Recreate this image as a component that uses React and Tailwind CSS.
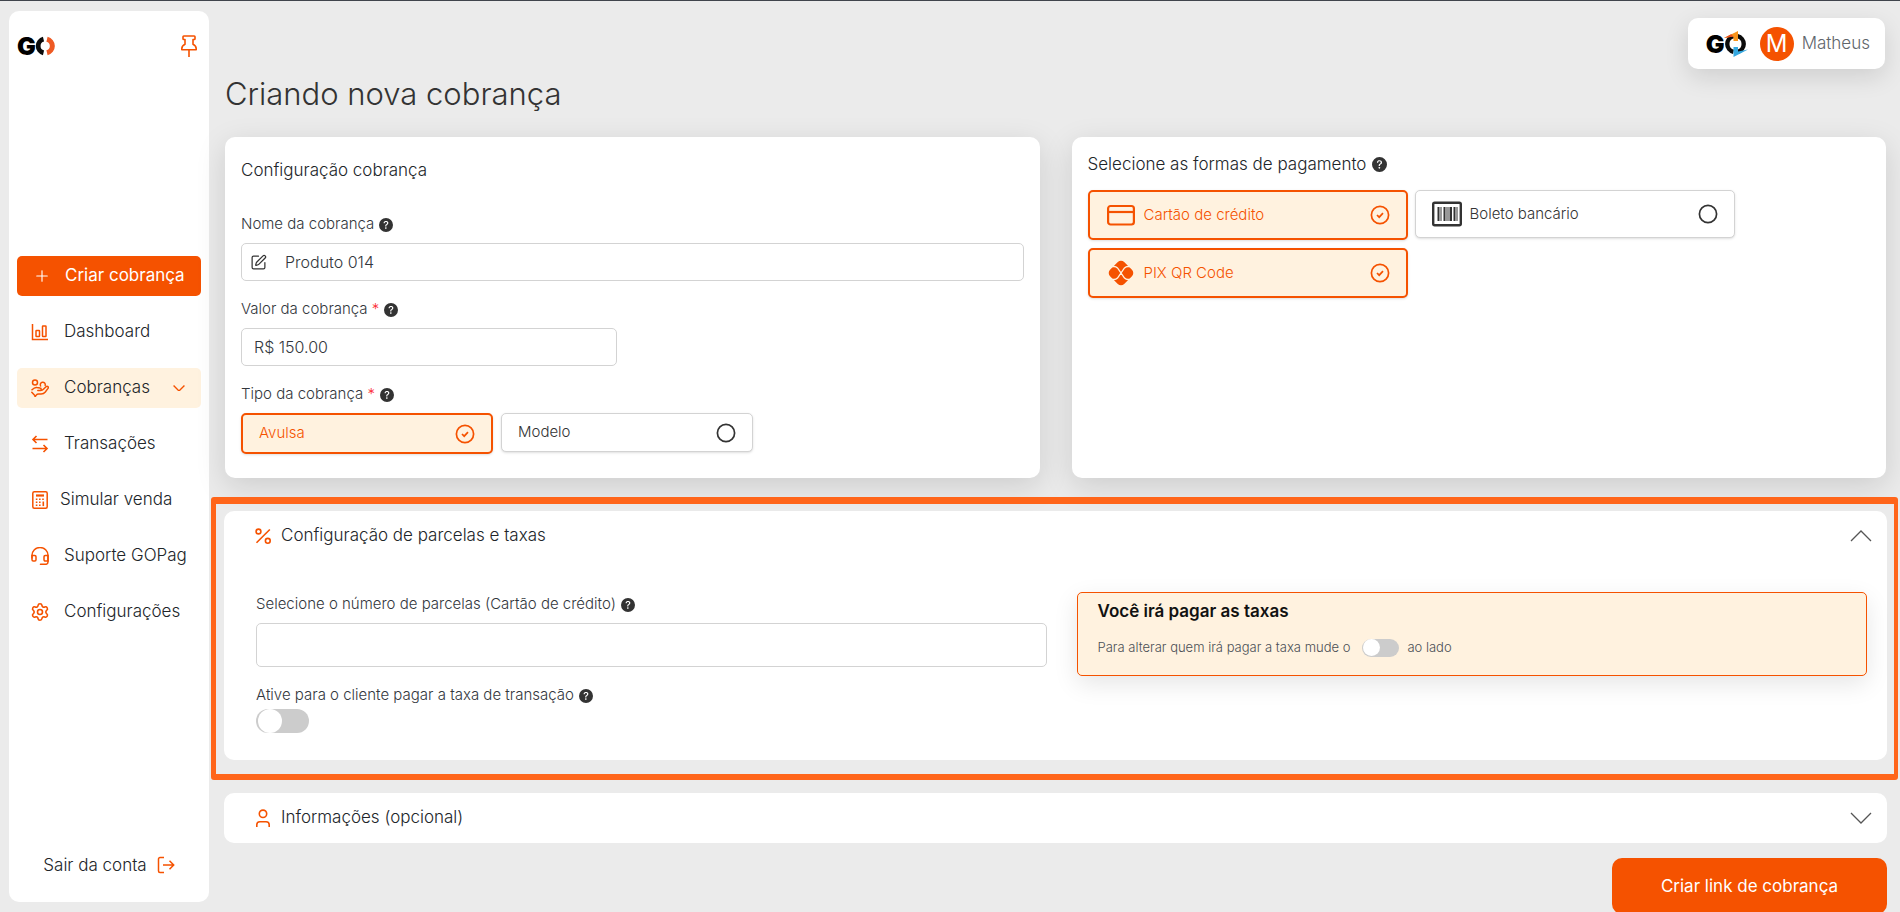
import React from "react";
import { BsQuestionCircleFill } from "react-icons/bs";
import { Plus, Settings, SquarePen } from "lucide-react";

function Logo({ colorful }) {
  return (
    <span className="flex items-center" role="img" aria-label="GO">
      <span className="text-[25px] leading-6 font-black text-black" aria-hidden="true">G</span>
      {colorful ? (
        <svg className="-ml-px h-7 w-6" viewBox="0 0 24 28" fill="none">
          <path d="M9.500 6.200A8 8 0 0 0 9.500 21.800" stroke="#0b0b0b" strokeWidth="4.4" />
          <path d="M13.500 6.200A8 8 0 0 1 13.500 21.800" stroke="#0b0b0b" strokeWidth="4.4" />
          <path d="M0 8 14 1v10H9.500V6.500Z" fill="#f7941d" />
          <path d="M0 8 7 4.200 9.500 6.500Z" fill="#e8501e" />
          <path d="M9.500 17h4.500v4.500L24 19.500 9.500 27Z" fill="#35a8e0" />
        </svg>
      ) : (
        <svg className="-ml-px h-5 w-5" viewBox="0 0 20 20" fill="none">
          <path d="M8.500 3.200A7 7 0 0 0 8.500 16.800" stroke="#0b0b0b" strokeWidth="4.800" />
          <path d="M12 3.200A7 7 0 0 1 12 16.800" stroke="#ee5a24" strokeWidth="5" />
        </svg>
      )}
    </span>
  );
}

function PinIcon() {
  return (
    <svg className="h-[22px] w-4" viewBox="0 0 16 22" fill="none" stroke="currentColor" strokeWidth="1.600" strokeLinejoin="round">
      <path d="M2.800 1h10.400a.8.8 0 0 1 .8.8v1.900a.8.8 0 0 1-.8.8H12v4.800c2 1 3.200 2.600 3.200 4.400v1.100H.8v-1.100c0-1.800 1.200-3.400 3.200-4.400V4.500H2.800a.8.8 0 0 1-.8-.8V1.800a.8.8 0 0 1 .8-.8ZM8 14.800V22" />
    </svg>
  );
}

function BarsIcon() {
  return (
    <svg className="size-[18px]" viewBox="0 0 18 18" fill="none" stroke="currentColor" strokeWidth="1.500">
      <path d="M1.500 1v15.500H17" />
      <rect x="5" y="7.500" width="3.500" height="6" rx="0.500" />
      <rect x="11.500" y="3" width="3.500" height="10.500" rx="0.500" />
    </svg>
  );
}

function HandCoinIcon() {
  return (
    <svg className="size-[18px]" viewBox="0 0 18 18" fill="none" stroke="currentColor" strokeWidth="1.500" strokeLinejoin="round" strokeLinecap="round">
      <circle cx="4" cy="3.500" r="2.500" />
      <path d="M9.600 7a2.500 2.500 0 1 1 4.600-.6" />
      <path d="M1 10.800c1.600-1.600 3.300-2.600 5-2.200l3 .5c1.600.2 1.600 2.400 0 2.400H6.800h2.700c1.500 0 2.300-.5 3.200-1.500l2.300-2.300c1.300-1.200 3 .3 2 1.700l-2.700 3.600c-1.200 1.500-2.300 2-4.200 2H7.500c-1 0-1.700.4-2.400 1.200L4 17.300" />
      <path d="M.8 13.200 4.500 17.300" />
    </svg>
  );
}

function SwapIcon() {
  return (
    <svg className="size-[18px]" viewBox="0 0 18 18" fill="none" stroke="currentColor" strokeWidth="1.600">
      <path d="M16.500 4.500H2M5.500 1 2 4.500 5.500 8M1.500 13.500H16M12.500 10l3.500 3.500-3.500 3.500" />
    </svg>
  );
}

function CalculatorIcon() {
  return (
    <svg className="size-[18px]" viewBox="0 0 18 18" fill="none" stroke="currentColor">
      <rect x="1.800" y=".8" width="14.400" height="16.400" rx="1.500" strokeWidth="1.500" />
      <path d="M5 4.500h8" strokeWidth="2.200" />
      <path d="M4.800 8.200h8.400M4.800 11.300h5.400M4.800 14.300h5.400" strokeWidth="1.500" strokeDasharray="1.600 1.600" />
      <path d="M12.300 10.500v4.600" strokeWidth="1.600" />
    </svg>
  );
}

function HeadsetIcon() {
  return (
    <svg className="size-[18px]" viewBox="0 0 18 18" fill="none" stroke="currentColor" strokeWidth="1.500" strokeLinecap="round">
      <path d="M1 11V8.500a8 8 0 0 1 16 0V15a2.300 2.300 0 0 1-2.300 2.300H9.500" />
      <path d="M1 8.500h2.800A1.200 1.200 0 0 1 5 9.700v3.100A1.200 1.200 0 0 1 3.800 14H2.200A1.200 1.200 0 0 1 1 12.800ZM17 8.500h-2.800A1.200 1.200 0 0 0 13 9.700v3.100a1.200 1.200 0 0 0 1.200 1.200H17Z" />
    </svg>
  );
}

function ExitIcon() {
  return (
    <svg className="size-[18px]" viewBox="0 0 18 18" fill="none" stroke="#f55200" strokeWidth="1.500">
      <path d="M7 1.500H3A1.500 1.500 0 0 0 1.500 3v12A1.500 1.500 0 0 0 3 16.500h4M6 9h10.500M12.500 4.800 16.700 9l-4.200 4.200" />
    </svg>
  );
}

function PercentIcon() {
  return (
    <svg className="size-[18px]" viewBox="0 0 18 18" fill="none" stroke="currentColor" strokeWidth="1.600">
      <circle cx="4.500" cy="4.500" r="2.400" />
      <circle cx="13.800" cy="13.800" r="2.400" />
      <path d="M15.800 2.500 2.500 15.800" />
    </svg>
  );
}

function UserIcon() {
  return (
    <svg className="size-[18px]" viewBox="0 0 18 18" fill="none" stroke="currentColor" strokeWidth="1.600">
      <circle cx="9" cy="4.800" r="3.700" />
      <path d="M2.800 18v-2.200c0-1.900 1.200-3.100 3.100-3.100h6.200c1.900 0 3.100 1.200 3.100 3.100V18" />
    </svg>
  );
}

function CardIcon() {
  return (
    <svg className="h-[26px] w-7" viewBox="0 0 28 26" fill="none" stroke="currentColor" strokeWidth="2.200">
      <rect x="1.100" y="4" width="25.800" height="18.500" rx="2.500" />
      <path d="M1 10h26" />
    </svg>
  );
}

function BarcodeIcon() {
  return (
    <svg className="h-[26px] w-[30px]" viewBox="0 0 30 26" fill="none" stroke="currentColor">
      <rect x="1.200" y="1.700" width="27.600" height="22.600" rx="1.500" strokeWidth="2.400" />
      <path d="M6.500 6v14M12.500 6v14M19 6v14M22.500 6v14" strokeWidth="2" />
      <path d="M9 6v14M15 6v14M17 6v14M25 6v14" strokeWidth="1" />
    </svg>
  );
}

function PixIcon() {
  return (
    <svg className="size-7" viewBox="0 0 28 28">
      <rect x="4" y="4" width="20" height="20" rx="4.500" fill="currentColor" transform="rotate(45 14 14)" />
      <path d="M4 7.500h3c1.400 0 2.500.5 3.500 1.500l7 10c1 1 2.100 1.500 3.500 1.500h3M4 20.500h3c1.400 0 2.500-.5 3.500-1.500l7-10c1-1 2.100-1.500 3.500-1.500h3" fill="none" stroke="#fff2df" strokeWidth="1.300" />
    </svg>
  );
}

function Chevron({ className, width }) {
  return (
    <svg className={className} viewBox="0 0 22 12" fill="none" stroke="currentColor" strokeWidth={width}>
      <path d="M1 1l10 10L21 1" />
    </svg>
  );
}

function Mark({ on }) {
  return (
    <svg className="size-5 shrink-0" viewBox="0 0 20 20" fill="none" stroke="currentColor" strokeWidth="1.700">
      <circle cx="10" cy="10" r="8.600" />
      {on && <path d="M7 10l2.200 2.200L13 8.200" />}
    </svg>
  );
}

function Label({ children, required, htmlFor, id }) {
  return (
    <div className="flex h-[21px] items-center gap-[5px] text-[15px] font-light text-[#33373d]">
      <label htmlFor={htmlFor} id={id}>
        {children}
        {required && <span className="text-red-500"> *</span>}
      </label>
      <BsQuestionCircleFill className="size-[14px] text-[#333]" />
    </div>
  );
}

function Option({ on, icon, tall, children }) {
  const tone = on
    ? "border-2 border-[#f55200] bg-[#fff2df] text-[#f55200]"
    : "border border-[#d3d3d3] bg-white text-[#333]";
  const size = tall ? (on ? "h-[50px] w-80" : "h-12 w-80") : on ? "h-[41px] w-63" : "h-[39px] w-63";
  return (
    <button
      type="button"
      aria-pressed={Boolean(on)}
      className={`flex items-center gap-2 rounded-[5px] px-4 text-[15px] font-light shadow-sm ${tone} ${size}`}
    >
      {icon && <span className="flex w-[30px] justify-center">{icon}</span>}
      <span className="flex-1 text-left">{children}</span>
      <Mark on={on} />
    </button>
  );
}

function NavItem({ icon, children, active, arrow, compact }) {
  return (
    <a
      href="#"
      className={`flex h-10 items-center rounded-[5px] pr-3 pl-[14px] text-[17px] font-light text-[#212529] ${compact ? "gap-[11px]" : "gap-[15px]"} ${active ? "bg-[#fff2df]" : ""}`}
    >
      <span className="flex size-[18px] shrink-0 items-center justify-center text-[#f55200]">{icon}</span>
      <span className="flex-1 whitespace-nowrap">{children}</span>
      {arrow && <Chevron className="mr-1 w-3 text-[#f55200]" width="2.500" />}
    </a>
  );
}

function PanelHeader({ icon, open, children }) {
  return (
    <button
      type="button"
      aria-expanded={Boolean(open)}
      className="flex h-[50px] w-full items-center gap-[9px] pr-[15px] pl-[30px] text-[17px] font-light text-[#212529]"
    >
      <span className="text-[#f55200]">{icon}</span>
      <span className="flex-1 text-left">{children}</span>
      <Chevron className={`w-[22px] text-[#555] ${open ? "rotate-180" : ""}`} width="1.300" />
    </button>
  );
}

function Toggle({ id }) {
  return (
    <span className="mt-[3px] flex h-6 w-[53px] items-center rounded-full bg-[#ccc] pl-[2px] has-checked:justify-end has-checked:bg-[#f55200]">
      <input id={id} type="checkbox" role="switch" className="size-6 cursor-pointer appearance-none rounded-full bg-white" />
    </span>
  );
}

export default function App() {
  return (
    <div className="flex h-screen overflow-hidden border-t border-[#40444c] bg-[#ebebeb] font-['Inter',sans-serif]">
      <aside className="my-[10px] ml-[9px] flex w-50 shrink-0 flex-col rounded-[10px] bg-white px-2">
        <div className="flex h-[70px] items-center justify-between pr-1">
          <Logo />
          <button type="button" aria-label="Fixar menu" className="text-[#f55200]">
            <PinIcon />
          </button>
        </div>
        <nav className="mt-[175px] flex flex-col gap-4">
          <a href="#" className="flex h-10 items-center gap-[14px] rounded-[5px] bg-[#f55200] pl-4 text-[17px] whitespace-nowrap text-white">
            <Plus className="size-[18px] shrink-0" strokeWidth={1.5} />
            Criar cobrança
          </a>
          <NavItem icon={<BarsIcon />}>Dashboard</NavItem>
          <NavItem icon={<HandCoinIcon />} active arrow>Cobranças</NavItem>
          <NavItem icon={<SwapIcon />}>Transações</NavItem>
          <NavItem icon={<CalculatorIcon />} compact>Simular venda</NavItem>
          <NavItem icon={<HeadsetIcon />}>Suporte GOPag</NavItem>
          <NavItem icon={<Settings className="size-5 shrink-0" strokeWidth={1.9} />}>Configurações</NavItem>
        </nav>
        <button type="button" className="mt-auto mb-6 flex items-center justify-center gap-[10px] text-[17px] font-light text-[#212529]">
          Sair da conta
          <ExitIcon />
        </button>
      </aside>

      <main className="flex min-w-0 flex-1 flex-col">
        <div className="flex justify-end pt-[17px] pr-[15px]">
          <div className="flex h-[51px] items-center gap-3 rounded-[10px] bg-white pr-[15px] pl-[18px] shadow-[0_8px_24px_rgba(0,0,0,0.12)]">
            <Logo colorful />
            <span className="flex size-[34px] items-center justify-center rounded-full bg-[#f55200] text-2xl text-white">M</span>
            <span className="-ml-1 text-[17px] font-light text-[#60656b]">Matheus</span>
          </div>
        </div>
        <h1 className="mt-[5px] ml-4 text-[31px] leading-10 font-light text-[#333]">Criando nova cobrança</h1>

        <div className="mt-[23px] mr-[14px] ml-4 grid grid-cols-2 gap-8">
          <section className="rounded-[10px] bg-white px-4 pt-[21px] pb-6 shadow-[0_8px_30px_rgba(0,0,0,0.13)]">
            <h2 className="mb-8 text-[17px] leading-6 font-light text-[#212529]">Configuração cobrança</h2>
            <div className="flex flex-col gap-[18px]">
              <div className="flex flex-col gap-2">
                <Label htmlFor="nome">Nome da cobrança</Label>
                <div className="flex h-[38px] items-center gap-[18px] rounded-[5px] border border-[#d3d3d3] px-2">
                  <SquarePen className="size-[17px] shrink-0 text-[#333]" strokeWidth={1.75} />
                  <input id="nome" defaultValue="Produto 014" className="min-w-0 flex-1 text-base font-light text-[#33373d] outline-none" />
                </div>
              </div>
              <div className="flex flex-col gap-2">
                <Label htmlFor="valor" required>Valor da cobrança</Label>
                <input id="valor" defaultValue="R$ 150.00" className="h-[38px] w-94 rounded-[5px] border border-[#d3d3d3] px-3 text-base font-light text-[#33373d] outline-none" />
              </div>
              <div className="flex flex-col gap-2">
                <Label id="tipo" required>Tipo da cobrança</Label>
                <div role="group" aria-labelledby="tipo" className="flex items-start gap-2">
                  <Option on>Avulsa</Option>
                  <Option>Modelo</Option>
                </div>
              </div>
            </div>
          </section>

          <section className="rounded-[10px] bg-white px-4 pt-[15px] shadow-[0_8px_30px_rgba(0,0,0,0.13)]">
            <h2 className="mb-[14px] flex items-center gap-[6px] text-[17px] leading-6 font-light text-[#212529]">
              Selecione as formas de pagamento
              <BsQuestionCircleFill className="size-[15px] text-[#333]" />
            </h2>
            <div className="flex flex-wrap items-start gap-x-[7px] gap-y-2">
              <Option on tall icon={<CardIcon />}>Cartão de crédito</Option>
              <Option tall icon={<BarcodeIcon />}>Boleto bancário</Option>
              <Option on tall icon={<PixIcon />}>PIX QR Code</Option>
            </div>
          </section>
        </div>

        <div className="mt-[19px] mr-[2px] ml-[2px] rounded-[3px] border-t-7 border-r-4 border-b-6 border-l-5 border-[#ff651a] pt-[7px] pr-[7px] pb-[14px] pl-2">
          <section className="rounded-[10px] bg-white">
            <PanelHeader open icon={<PercentIcon />}>Configuração de parcelas e taxas</PanelHeader>
            <div className="grid grid-cols-2 gap-[30px] pt-[31px] pr-5 pb-[27px] pl-8">
              <div className="pt-[2px]">
                <Label htmlFor="parcelas">Selecione o número de parcelas (Cartão de crédito)</Label>
                <input id="parcelas" className="mt-2 h-11 w-full rounded-[5px] border border-[#d3d3d3] px-3 outline-none" />
                <div className="mt-[18px]">
                  <Label htmlFor="taxa">Ative para o cliente pagar a taxa de transação</Label>
                </div>
                <Toggle id="taxa" />
              </div>
              <div className="flex h-[84px] flex-col gap-[15px] rounded-[5px] border border-[#f55200] bg-[#fff2df] px-5 pt-[6px] shadow-[0_8px_24px_rgba(0,0,0,0.1)]">
                <strong className="text-[17px] leading-6 font-semibold text-[#111]">Você irá pagar as taxas</strong>
                <p className="flex items-center text-[13px] font-light text-[#4a4f55]">
                  Para alterar quem irá pagar a taxa mude o
                  <span className="mr-2 ml-3 flex h-[18px] w-[37px] items-center rounded-full bg-[#ccc] pl-px">
                    <span className="size-[17px] rounded-full bg-white" />
                  </span>
                  ao lado
                </p>
              </div>
            </div>
          </section>
        </div>

        <section className="mt-[13px] mr-[13px] ml-[15px] rounded-[10px] bg-white">
          <PanelHeader icon={<UserIcon />}>Informações (opcional)</PanelHeader>
        </section>
        <button type="button" className="mt-[15px] mr-[13px] w-[275px] shrink-0 self-end rounded-[10px] bg-[#f55200] py-4 text-[17px] leading-6 text-white">
          Criar link de cobrança
        </button>
      </main>
    </div>
  );
}
